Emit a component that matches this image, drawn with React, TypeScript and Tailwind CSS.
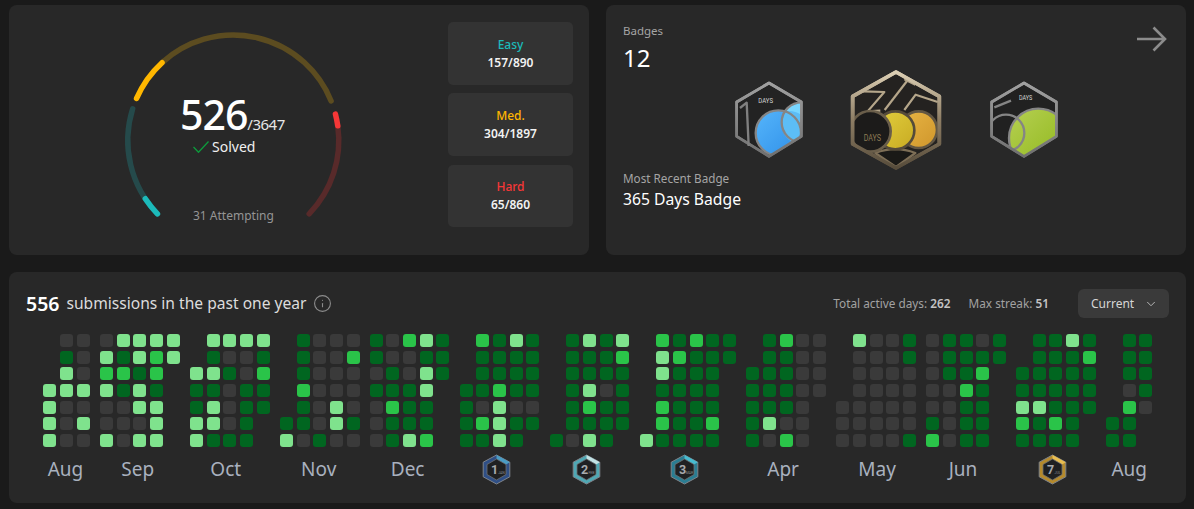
import React from 'react';
import { ChevronDown, Info } from 'lucide-react';

// one string per row, '.' = no cell, 0 = none, 1..3 = green levels
const months: { label?: string; shift?: string; badge?: { n: string; sub: string; kind: string }; rows: string[] }[] = [
  { label: 'Aug', shift: '-translate-x-[1px]', rows: ['.00', '.10', '.30', '333', '300', '303', '300'] },
  { label: 'Sep', shift: '-translate-x-[2px]', rows: ['03333', '31323', '2212.', '3131.', '0033.', '0003.', '3033.'] },
  { label: 'Oct', shift: '-translate-x-[4px]', rows: ['.3333', '.1001', '33102', '11011', '13011', '3301.', '3111.'] },
  { label: 'Nov', shift: '-translate-x-[1px]', rows: ['.1000', '.1002', '.1000', '.2000', '.1030', '11031', '30100'] },
  { label: 'Dec', shift: '-translate-x-[2px]', rows: ['10231', '10011', '01031', '1113.', '0211.', '0111.', '0132.'] },
  { badge: { n: '1', sub: 'JAN', kind: 'jan' }, rows: ['.2131', '.1111', '.1111', '11211', '10300', '12311', '1131.'] },
  { badge: { n: '2', sub: 'FEB', kind: 'feb' }, rows: ['.1313', '.1112', '.1111', '.1301', '.1211', '.1111', '1031.'] },
  { badge: { n: '3', sub: 'MAR', kind: 'mar' }, rows: ['.21211', '.32111', '.3111.', '.1111.', '.2111.', '.2112.', '31111.'] },
  { label: 'Apr', shift: '-translate-x-[3px]', rows: ['.1200', '.1100', '11100', '11100', '1110.', '1300.', '1020.'] },
  { label: 'May', shift: 'translate-x-[1px]', rows: ['.3001', '.0001', '.0000', '.0000', '00000', '00000', '00001'] },
  { label: 'Jun', shift: '-translate-x-[3px]', rows: ['01101', '01111', '0112.', '0021.', '0011.', '1011.', '2011.'] },
  { badge: { n: '7', sub: 'JUL', kind: 'jul' }, rows: ['.1131', '.1112', '11111', '11111', '33111', '2121.', '1111.'] },
  { label: 'Aug', rows: ['.11', '.11', '.11', '.01', '.20', '11.', '11.'] },
];

function cellClass(c: string) {
  if (c === '.') return 'w-[13px] h-[13px]';
  if (c === '1') return 'w-[13px] h-[13px] rounded-[3px] bg-[#016620]';
  if (c === '2') return 'w-[13px] h-[13px] rounded-[3px] bg-[#2ac449]';
  if (c === '3') return 'w-[13px] h-[13px] rounded-[3px] bg-[#7fe28d]';
  return 'w-[13px] h-[13px] rounded-[3px] bg-[#3a3a3a]';
}

const CX = 113.3;
const CY = 108.5;
const R = 105.5;

function arc(from: number, to: number) {
  const p = (a: number) => {
    const r = (a * Math.PI) / 180;
    return `${(CX + R * Math.sin(r)).toFixed(2)} ${(CY - R * Math.cos(r)).toFixed(2)}`;
  };
  return `M${p(from)} A${R} ${R} 0 ${to - from > 180 ? 1 : 0} 1 ${p(to)}`;
}

function Gauge() {
  return (
    <svg width="226" height="200" viewBox="0 0 226 200" fill="none" strokeLinecap="round" strokeWidth="5.5">
      <path d={arc(-134, -72.5)} stroke="#254a4b" />
      <path d={arc(-134, -123.5)} stroke="#1cbaba" />
      <path d={arc(-42, 68)} stroke="#5c4c20" />
      <path d={arc(-66.5, -42.5)} stroke="#ffb700" />
      <path d={arc(82, 134)} stroke="#582a2a" />
      <path d={arc(75.5, 82)} stroke="#f63737" />
    </svg>
  );
}

function StatBox({ label, value, color, h }: { label: string; value: string; color: string; h: string }) {
  return (
    <div className={`${h} w-[125px] rounded-[5px] bg-[#333333] flex flex-col items-center justify-center gap-[2px]`}>
      <div className={`text-[12px] leading-[16px] font-medium ${color}`}>{label}</div>
      <div className="text-[12px] leading-[16px] font-semibold text-[#f2f2f2]">{value}</div>
    </div>
  );
}

const narrow = "'Liberation Sans Narrow','Roboto',sans-serif";
const smallHex = 'M117 15 L214 72 L214 175 L117 235 L20 175 L20 72 Z';

function TenBadge() {
  return (
    <svg width="78" height="84" viewBox="0 0 234 252" fill="none">
      <defs>
        <clipPath id="ten-hex">
          <path d={smallHex} />
        </clipPath>
        <linearGradient id="ten-blue" x1="0" y1="0" x2="1" y2="1">
          <stop offset="0" stopColor="#55b5fb" />
          <stop offset="1" stopColor="#2f8fe8" />
        </linearGradient>
        <linearGradient id="ten-line" x1="0" y1="0" x2="0" y2="1">
          <stop offset="0" stopColor="#a0a0a0" />
          <stop offset="1" stopColor="#6f6f6f" />
        </linearGradient>
      </defs>
      <path d={smallHex} fill="#232323" stroke="url(#ten-line)" strokeWidth="8" strokeLinejoin="round" />
      <g clipPath="url(#ten-hex)">
        <circle cx="215" cy="133" r="60" fill="#78d6ff" />
        <circle cx="145" cy="165" r="68" fill="url(#ten-blue)" />
        <path d="M155 133 A60 60 0 0 0 190 193 A68 68 0 0 0 213 165 L213 110 A68 68 0 0 0 165 100 A60 60 0 0 0 155 133 Z" fill="#5cbdf6" />
        <circle cx="215" cy="133" r="60" stroke="#858585" strokeWidth="7" />
        <circle cx="145" cy="165" r="68" stroke="#858585" strokeWidth="7" />
      </g>
      <path d={smallHex} stroke="url(#ten-line)" strokeWidth="8" strokeLinejoin="round" />
      <path d="M30 90 L50 74 L56 204" stroke="#808080" strokeWidth="7" strokeLinejoin="round" />
      <text x="107" y="74" fontSize="22" fontFamily={narrow} fill="#d4d4d4" textAnchor="middle" textLength="44" lengthAdjust="spacingAndGlyphs">DAYS</text>
    </svg>
  );
}

const goldHex = 'M147 12 L277 85 L277 228 L147 300 L17 228 L17 85 Z';

function YearBadge() {
  return (
    <svg width="98" height="104" viewBox="0 0 294 312" fill="none">
      <defs>
        <linearGradient id="gold-line" x1="0" y1="0" x2="0" y2="1">
          <stop offset="0" stopColor="#dccfb4" />
          <stop offset="0.5" stopColor="#8d7d64" />
          <stop offset="1" stopColor="#574c3b" />
        </linearGradient>
        <linearGradient id="gold-yellow" x1="0" y1="0" x2="1" y2="1">
          <stop offset="0" stopColor="#e2cf3e" />
          <stop offset="1" stopColor="#c8aa22" />
        </linearGradient>
        <linearGradient id="gold-orange" x1="0" y1="0" x2="1" y2="1">
          <stop offset="0" stopColor="#e8b544" />
          <stop offset="1" stopColor="#cf962c" />
        </linearGradient>
        <clipPath id="gold-hex">
          <path d={goldHex} />
        </clipPath>
      </defs>
      <path d={goldHex} fill="#242220" stroke="url(#gold-line)" strokeWidth="11" strokeLinejoin="round" />
      <g clipPath="url(#gold-hex)" stroke="#b5a68a" strokeWidth="6.5" strokeLinejoin="round">
        <path d="M48 70 L112 72 L38 158" />
        <path d="M62 130 L100 128" />
        <path d="M187 30 L113 126" />
        <path d="M172 34 L205 50" />
        <path d="M172 126 L206 80 L272 102" />
        <path d="M85 255 Q145 232 205 255 L147 297 Z" fill="#1a1917" stroke="#7d6e56" />
      </g>
      <circle cx="215" cy="185" r="55" fill="url(#gold-orange)" stroke="#615643" strokeWidth="8" />
      <circle cx="145" cy="187" r="57" fill="url(#gold-yellow)" stroke="#554b3a" strokeWidth="8" />
      <g clipPath="url(#gold-hex)">
        <circle cx="70" cy="190" r="61" fill="#1c1b1a" stroke="#6a5e4a" strokeWidth="8" />
      </g>
      <path d={goldHex} stroke="url(#gold-line)" strokeWidth="11" strokeLinejoin="round" />
      <text x="76" y="220" fontSize="27" fontFamily={narrow} fill="#8c7a54" textAnchor="middle" textLength="52" lengthAdjust="spacingAndGlyphs">DAYS</text>
    </svg>
  );
}

function SixtyBadge() {
  return (
    <svg width="78" height="84" viewBox="0 0 234 252" fill="none">
      <defs>
        <clipPath id="sixty-hex">
          <path d={smallHex} />
        </clipPath>
        <linearGradient id="sixty-green" x1="0" y1="0" x2="1" y2="1">
          <stop offset="0" stopColor="#b6d052" />
          <stop offset="1" stopColor="#8eb61a" />
        </linearGradient>
        <linearGradient id="sixty-line" x1="0" y1="0" x2="0" y2="1">
          <stop offset="0" stopColor="#a0a0a0" />
          <stop offset="1" stopColor="#6f6f6f" />
        </linearGradient>
      </defs>
      <path d={smallHex} fill="#212121" stroke="url(#sixty-line)" strokeWidth="8" strokeLinejoin="round" />
      <g clipPath="url(#sixty-hex)">
        <circle cx="160" cy="180" r="88" fill="url(#sixty-green)" stroke="#858585" strokeWidth="7" />
        <circle cx="63" cy="165" r="55" stroke="#858585" strokeWidth="7" />
      </g>
      <path d={smallHex} stroke="url(#sixty-line)" strokeWidth="8" strokeLinejoin="round" />
      <path d="M28 88 L78 68" stroke="#858585" strokeWidth="7" />
      <text x="122" y="66" fontSize="20" fontFamily={narrow} fill="#d4d4d4" textAnchor="middle" textLength="40" lengthAdjust="spacingAndGlyphs">DAYS</text>
    </svg>
  );
}

const hexColors: Record<string, { ring: string; hi: string }> = {
  jan: { ring: '#2f4f86', hi: '#4a9cc4' },
  feb: { ring: '#4fa8b4', hi: '#c2e2e4' },
  mar: { ring: '#2a7d92', hi: '#48bcd0' },
  jul: { ring: '#b58a2c', hi: '#e8bd50' },
};

function MonthBadge({ n, sub, kind }: { n: string; sub: string; kind: string }) {
  const c = hexColors[kind];
  return (
    <svg width="29" height="31" viewBox="0 0 29 31" className="-translate-x-[3px]">
      <path d="M14.5 1 L27.8 8.2 L27.8 22.8 L14.5 30 L1.2 22.8 L1.2 8.2 Z" fill={c.ring} stroke="#7f848b" strokeWidth="1" strokeLinejoin="round" />
      <path d="M14.5 1 L27.8 8.2 L24 10.5 L14.5 5 Z" fill={c.hi} />
      <path d="M14.5 5 L24 10.5 L24 20.5 L14.5 26 L5 20.5 L5 10.5 Z" fill="#1f2022" stroke="#6f7174" strokeWidth="0.8" strokeLinejoin="round" />
      <text x="12.5" y="20" fontSize="12.5" fontWeight="700" fontFamily="'Roboto',sans-serif" fill="#a8abae" textAnchor="middle">{n}</text>
      <text x="19.5" y="20" fontSize="3.5" fontFamily="'Roboto',sans-serif" fill="#85888c" textAnchor="middle">{sub}</text>
    </svg>
  );
}

export default function App() {
  return (
    <div className="min-h-screen bg-[#1a1a1a] pl-[9px] pr-[8px] pt-[5px] font-['Noto_Sans',sans-serif]">
      <div className="grid grid-cols-2 gap-x-[17px]">
        {/* solved card */}
        <div className="h-[250px] rounded-[8px] bg-[#282828] flex pt-[17px]">
          <div className="relative ml-[111px] mt-[10px] w-[226px] h-[200px]">
            <Gauge />
            <div className="absolute left-[60px] top-[65px] flex items-baseline text-white">
              <span className="text-[41px] leading-[34px] font-medium tracking-[-1px]">526</span>
              <span className="text-[15px] leading-[20px] tracking-[-0.5px] text-[#e6e6e6]">/3647</span>
            </div>
            <div className="absolute left-[73px] top-[105px] flex items-center gap-[3px] text-[14px] leading-[20px] text-[#f0f0f0]">
              <svg width="16" height="12" viewBox="0 0 16 12" fill="none" stroke="#0d9a3c" strokeWidth="1.3">
                <path d="M0.5 6 L5.5 11.3 L15.5 0.5" />
              </svg>
              <span>Solved</span>
            </div>
            <div className="absolute left-[73px] top-[175px] text-[12px] leading-[18px] text-[#959595] whitespace-nowrap">31 Attempting</div>
          </div>
          <div className="ml-auto mr-[16px] flex flex-col">
            <StatBox label="Easy" value="157/890" color="text-[#1cbaba]" h="h-[63px]" />
            <div className="h-[8px]" />
            <StatBox label="Med." value="304/1897" color="text-[#ffb700]" h="h-[63px]" />
            <div className="h-[9px]" />
            <StatBox label="Hard" value="65/860" color="text-[#f63737]" h="h-[62px]" />
          </div>
        </div>

        {/* badges card */}
        <div className="h-[250px] rounded-[8px] bg-[#282828] flex flex-col px-[17px]">
          <div className="h-[66px] flex justify-between pt-[17px]">
            <div>
              <div className="text-[11.5px] leading-[18px] text-[#a5a5a5]">Badges</div>
              <div className="mt-[2px] text-[24px] leading-[32px] text-white">12</div>
            </div>
            <svg width="30" height="26" viewBox="0 0 30 26" fill="none" stroke="#8c8c8c" strokeWidth="2.6" className="mt-[4px] mr-[2px]">
              <path d="M0 13 H28 M16.5 1.5 L28 13 L16.5 24.5" />
            </svg>
          </div>
          <div className="h-[98px] flex items-center justify-center gap-[39.5px]">
            <TenBadge />
            <YearBadge />
            <SixtyBadge />
          </div>
          <div className="text-[11.7px] leading-[18px] text-[#a5a5a5]">Most Recent Badge</div>
          <div className="text-[15.7px] leading-[24px] text-white">365 Days Badge</div>
        </div>
      </div>

      {/* calendar card */}
      <div className="mt-[17px] h-[231px] rounded-[8px] bg-[#282828] pt-[17px]">
        <div className="flex items-center h-[29px] pl-[17px] pr-[17px]">
          <span className="text-[19.5px] font-semibold text-white">556</span>
          <span className="ml-[7px] text-[15.6px] text-[#dcdcdc]">submissions in the past one year</span>
          <Info className="ml-[6px] w-[19px] h-[19px] text-[#8c8c8c]" strokeWidth={1.4} />
          <div className="ml-auto text-[11.8px] text-[#a2a2a2]">
            Total active days: <span className="font-semibold text-[#c4c4c4]">262</span>
          </div>
          <div className="ml-[18px] text-[11.8px] text-[#a2a2a2]">
            Max streak: <span className="font-semibold text-[#c4c4c4]">51</span>
          </div>
          <div className="ml-[29px] w-[91px] h-[29px] rounded-[6px] bg-[#3a3a3a] flex items-center pl-[13px] text-[12px] text-[#d6d6d6]">
            Current
            <ChevronDown className="ml-[10px] w-[14px] h-[14px] text-[#bdbdbd]" strokeWidth={1.6} />
          </div>
        </div>
        <div className="mt-[16px] pl-[34.33px] flex gap-x-[10.33px]">
          {months.map((m, i) => (
            <div key={i} className="flex flex-col items-center">
              <div className="flex flex-col gap-y-[3.67px]">
                {m.rows.map((row, r) => (
                  <div key={r} className="flex gap-x-[3.67px]">
                    {row.split('').map((c, k) => (
                      <div key={k} className={cellClass(c)} />
                    ))}
                  </div>
                ))}
              </div>
              <div className={`mt-[7px] h-[31px] flex items-center text-[19px] leading-[26px] text-[#a9b1bf] ${m.shift ?? ''}`}>
                {m.label ? m.label : m.badge && <MonthBadge {...m.badge} />}
              </div>
            </div>
          ))}
        </div>
      </div>
    </div>
  );
}
